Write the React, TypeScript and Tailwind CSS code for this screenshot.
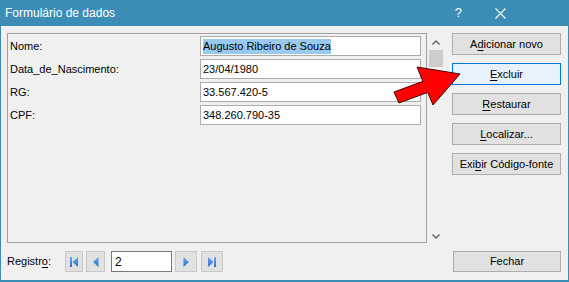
import React from "react";

const font = "[font-family:'Liberation_Sans',Arial,sans-serif]";

function U({ children }: { children: React.ReactNode }) {
  return <span className="underline underline-offset-[2px] decoration-[1px]">{children}</span>;
}

function Button({
  children,
  focused,
  className = "",
}: {
  children: React.ReactNode;
  focused?: boolean;
  className?: string;
}) {
  return (
    <div
      className={`h-[22px] flex items-center justify-center border text-[11px] text-black ${
        focused ? "border-[#0078d7] bg-[#e5f1fb]" : "border-[#adadad] bg-[#e1e1e1]"
      } ${className}`}
    >
      {children}
    </div>
  );
}

function NavIcon({ kind }: { kind: "first" | "prev" | "next" | "last" }) {
  const fill = "#2c6fd8";
  return (
    <svg width="12" height="12" viewBox="0 0 12 12">
      <defs>
        <linearGradient id={`g-${kind}`} x1="0" y1="0" x2="0" y2="1">
          <stop offset="0" stopColor="#6aa6f0" />
          <stop offset="1" stopColor={fill} />
        </linearGradient>
      </defs>
      {kind === "first" && (
        <>
          <rect x="2" y="1" width="2" height="10" fill={`url(#g-${kind})`} />
          <polygon points="10,1 10,11 4.5,6" fill={`url(#g-${kind})`} />
        </>
      )}
      {kind === "prev" && <polygon points="8.5,1 8.5,11 3,6" fill={`url(#g-${kind})`} />}
      {kind === "next" && <polygon points="3.5,1 3.5,11 9,6" fill={`url(#g-${kind})`} />}
      {kind === "last" && (
        <>
          <polygon points="2,1 2,11 7.5,6" fill={`url(#g-${kind})`} />
          <rect x="8" y="1" width="2" height="10" fill={`url(#g-${kind})`} />
        </>
      )}
    </svg>
  );
}

function NavButton({ kind, className }: { kind: "first" | "prev" | "next" | "last"; className: string }) {
  return (
    <div className={`h-[21px] flex items-center justify-center border border-[#c8c8c8] bg-[#e1e1e1] ${className}`}>
      <NavIcon kind={kind} />
    </div>
  );
}

const fields = [
  { label: "Nome:", value: "Augusto Ribeiro de Souza", selected: true },
  { label: "Data_de_Nascimento:", value: "23/04/1980" },
  { label: "RG:", value: "33.567.420-5" },
  { label: "CPF:", value: "348.260.790-35" },
];

export default function App() {
  return (
    <div className={`relative w-[569px] h-[282px] bg-[#f0f0f0] border-x border-b-2 border-[#3b8db7] flex flex-col ${font}`}>
      {/* Title bar */}
      <div className="h-[26px] -mx-px bg-[#3b8db7] flex items-center text-white shrink-0">
        <span className="ml-[5px] text-[12px]">Formulário de dados</span>
        <span className="ml-auto mr-[33px] text-[13px]">?</span>
        <svg width="11" height="11" viewBox="0 0 11 11" className="mr-[63px] hidden" />
        <svg width="11" height="11" viewBox="0 0 11 11" className="mr-[63px]">
          <path d="M0.5 0.5 L10.5 10.5 M10.5 0.5 L0.5 10.5" stroke="white" strokeWidth="1.1" />
        </svg>
      </div>

      {/* Main area */}
      <div className="flex mt-[7px] pl-[6px]">
        <div className="w-[420px] h-[210px] border border-[#a0a0a0] pt-[2px] pl-[2px] flex flex-col gap-[3px]">
          {fields.map((f) => (
            <div key={f.label} className="flex items-center h-[20px]">
              <div className="w-[190px] text-[11px] text-black">{f.label}</div>
              <div className="w-[221px] h-[20px] border border-[#acacac] bg-white flex items-center pl-[2px] text-[11px] text-black">
                {f.selected ? <span className="bg-[#99c9ef] leading-[15px]">{f.value}</span> : f.value}
              </div>
            </div>
          ))}
        </div>

        {/* Scrollbar */}
        <div className="w-[17px] h-[210px] flex flex-col items-center">
          <svg width="8" height="5" viewBox="0 0 8 5" className="mt-[7px]">
            <path d="M0.5 4.5 L4 1 L7.5 4.5" stroke="#606060" strokeWidth="1.4" fill="none" />
          </svg>
          <div className="mt-[5px] w-[14px] h-[17px] bg-[#cdcdcd]" />
          <svg width="8" height="5" viewBox="0 0 8 5" className="mt-auto mb-[4px]">
            <path d="M0.5 0.5 L4 4 L7.5 0.5" stroke="#606060" strokeWidth="1.4" fill="none" />
          </svg>
        </div>

        {/* Buttons */}
        <div className="ml-[8px] w-[109px] flex flex-col gap-[8px]">
          <Button>
            A<U>d</U>icionar novo
          </Button>
          <Button focused>
            <U>E</U>xcluir
          </Button>
          <Button>
            <U>R</U>estaurar
          </Button>
          <Button>
            <U>L</U>ocalizar...
          </Button>
          <Button>
            Exi<U>b</U>ir Código-fonte
          </Button>
        </div>
      </div>

      {/* Bottom row */}
      <div className="flex items-center mt-[8px] h-[21px] pl-[6px] pr-[7px]">
        <span className="w-[58px] text-[11px] text-black">
          Registr<U>o</U>:
        </span>
        <NavButton kind="first" className="w-[18px]" />
        <NavButton kind="prev" className="w-[19px] ml-[3px]" />
        <div className="ml-[6px] w-[61px] h-[21px] border border-[#7a7a7a] bg-white flex items-center pl-[3px] text-[12px] text-black">
          2
        </div>
        <NavButton kind="next" className="w-[22px] ml-[3px]" />
        <NavButton kind="last" className="w-[22px] ml-[4px]" />
        <Button className="ml-auto w-[108px] !h-[21px]">Fechar</Button>
      </div>

      {/* Red arrow annotation */}
      <svg className="absolute left-[-1px] top-0 pointer-events-none" width="569" height="282" viewBox="0 0 569 282">
        <polygon
          points="394,92 423,81.3 417,67 460,74 433,105 427.7,92.4 399,103"
          fill="#ff0000"
          stroke="#4a0000"
          strokeWidth="1"
          strokeLinejoin="miter"
        />
      </svg>
    </div>
  );
}
